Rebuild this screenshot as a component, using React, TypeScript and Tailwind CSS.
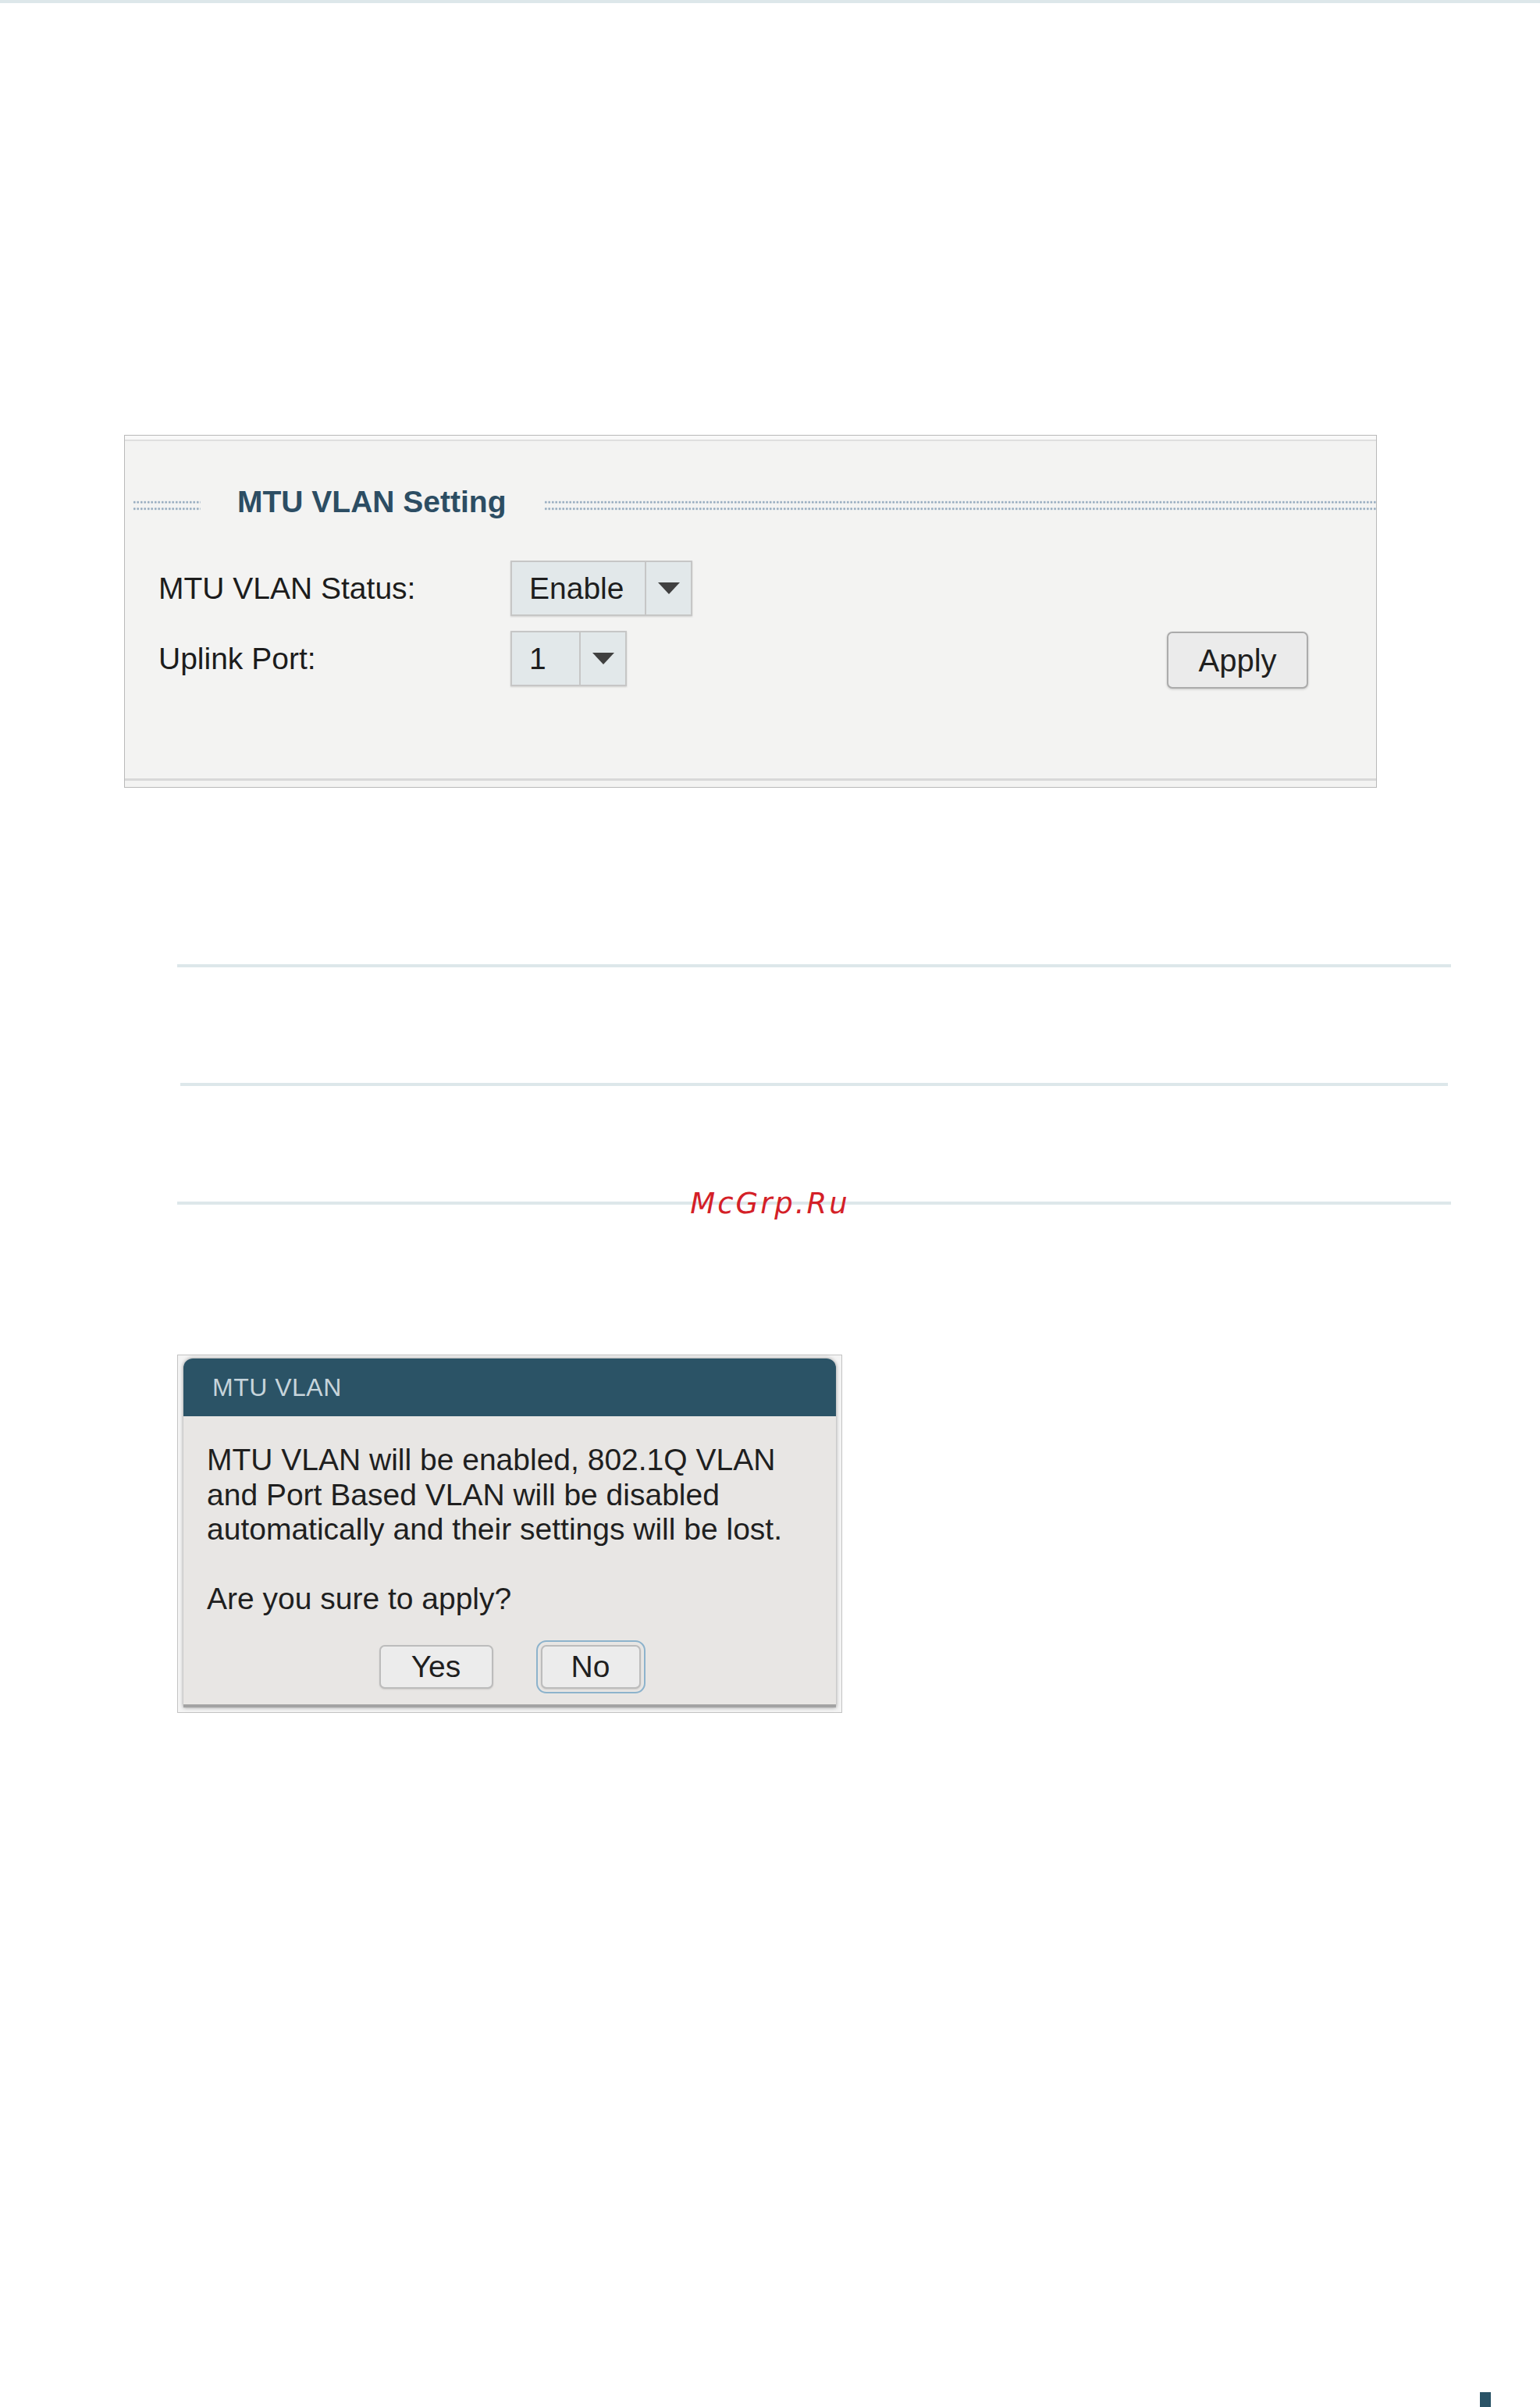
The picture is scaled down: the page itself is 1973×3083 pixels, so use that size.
import React from "react";

const font = "font-['Liberation_Sans',Arial,sans-serif]";

const Caret = () => (
  <svg width="28" height="15" viewBox="0 0 28 15">
    <polygon points="0,0 28,0 14,15" fill="#404040" />
  </svg>
);

const Select = ({ value, textW }: { value: string; textW: string }) => {
  return (
    <div className="flex h-[71px] border-2 border-[#c6c6c6] bg-[#e2e8ea] shadow-[0_1px_2px_rgba(0,0,0,0.15)]">
      <div className={`${textW} flex items-center pl-[22px] text-[39px] leading-[40px] text-[#1e1e1e]`}>{value}</div>
      <div className="flex w-[59px] items-center justify-center border-l-2 border-[#c6c6c6]">
        <Caret />
      </div>
    </div>
  );
};

const Dots = ({ className }: { className: string }) => (
  <div
    className={`${className} h-[19px] bg-[radial-gradient(circle,#93aabe_1.1px,transparent_1.7px)] bg-[length:4.5px_8.5px]`}
  />
);

const Btn = ({ label, w, focus }: { label: string; w: string; focus?: boolean }) => (
  <button
    type="button"
    className={`${w} h-[56px] rounded-[7px] border-2 border-[#bcbcbc] bg-[#ececec] text-[39px] leading-[40px] text-[#1f1f1f] shadow-[0_1px_2px_rgba(0,0,0,0.12)] ${
      focus ? "outline-2 outline-[#8db3cc] outline-offset-[4px]" : ""
    }`}
  >
    {label}
  </button>
);

export default function App() {
  return (
    <div className={`${font} relative flex h-[3083px] w-full flex-col bg-white`}>
      <div className="h-[4px] w-full bg-[#dde7ea]" />

      {/* settings panel */}
      <div className="ml-[159px] mt-[553px] flex h-[452px] w-[1605px] flex-col border border-[#b9b9b9] bg-[#f3f3f2]">
        <div className="h-[7px] border-b-2 border-[#dfdfdf] bg-[#f9f9f9]" />

        <div className="mt-[58px] flex h-[40px] items-start">
          <Dots className="ml-[10px] mt-[16px] w-[87px]" />
          <div className="ml-[47px] text-[39px] font-bold leading-[40px] text-[#2c4d63]">MTU VLAN Setting</div>
          <Dots className="ml-[49px] mt-[16px] flex-1" />
        </div>

        <div className="mt-[55px] flex items-center pl-[43px]">
          <div className="w-[451px] text-[39px] leading-[40px] text-[#1c1c1c]">MTU VLAN Status:</div>
          <Select value="Enable" textW="w-[170px]" />
        </div>

        <div className="mt-[19px] flex items-start pl-[43px] pr-[87px]">
          <div className="flex h-[71px] w-[451px] items-center text-[39px] leading-[40px] text-[#1c1c1c]">Uplink Port:</div>
          <Select value="1" textW="w-[86px]" />
          <button
            type="button"
            className="ml-auto mt-[1px] h-[73px] w-[181px] rounded-[7px] border-2 border-[#ababab] bg-[#ebebeb] text-[40px] leading-[40px] text-[#1f1f1f] shadow-[0_1px_3px_rgba(0,0,0,0.18)]"
          >
            Apply
          </button>
        </div>

        <div className="mb-[8px] mt-auto h-[3px] bg-[#d8d8d8]" />
      </div>

      {/* rules */}
      <div className="ml-[227px] mt-[226px] h-[4px] w-[1632px] bg-[#dde7ea]" />
      <div className="ml-[231px] mt-[148px] h-[4px] w-[1624px] bg-[#dde7ea]" />
      <div className="relative mt-[148px] h-[4px] w-full">
        <div className="ml-[227px] h-[4px] w-[1632px] bg-[#dde7ea]" />
        <div className="absolute left-1/2 top-[-16px] -translate-x-1/2 font-['DejaVu_Sans',sans-serif] text-[37px] italic leading-[37px] tracking-[3px] text-[#d42027]">
          McGrp.Ru
        </div>
      </div>

      {/* confirm dialog */}
      <div className="ml-[227px] mt-[192px] w-[852px] border border-[#c3c3c3] bg-[#f4f4f4] px-[7px] pb-[6px] pt-[4px]">
        <div className="overflow-hidden rounded-t-[12px] border-b-4 border-[#a3a3a3] shadow-[0_0_5px_rgba(0,0,0,0.4)]">
          <div className="flex h-[74px] items-center bg-[#2b5366] pl-[37px] text-[32px] leading-[32px] tracking-[0.5px] text-[#c6d4db]">
            MTU VLAN
          </div>
          <div className="bg-[#e8e6e4] pb-[20px] pl-[30px] pt-[34px]">
            <p className="text-[39px] leading-[44.5px] text-[#1f1f1f]">
              MTU VLAN will be enabled, 802.1Q VLAN
              <br />
              and Port Based VLAN will be disabled
              <br />
              automatically and their settings will be lost.
              <br />
              <br />
              Are you sure to apply?
            </p>
            <div className="mt-[36.5px] flex justify-center gap-[61px] pr-[30px]">
              <Btn label="Yes" w="w-[146px]" />
              <Btn label="No" w="w-[128px]" focus />
            </div>
          </div>
        </div>
      </div>

      <div className="mt-auto flex justify-end pr-[63px]">
        <div className="h-[19px] w-[14px] bg-[#2a5366]" />
      </div>
    </div>
  );
}
